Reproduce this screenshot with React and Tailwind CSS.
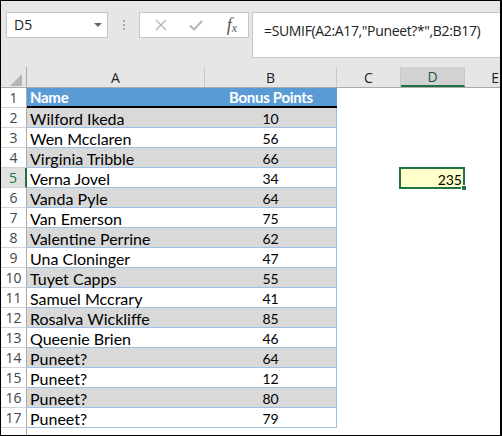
import React from 'react';

const rows = [
  ['Wilford Ikeda', 10],
  ['Wen Mcclaren', 56],
  ['Virginia Tribble', 66],
  ['Verna Jovel', 34],
  ['Vanda Pyle', 64],
  ['Van Emerson', 75],
  ['Valentine Perrine', 62],
  ['Una Cloninger', 47],
  ['Tuyet Capps', 55],
  ['Samuel Mccrary', 41],
  ['Rosalva Wickliffe', 85],
  ['Queenie Brien', 46],
  ['Puneet?', 64],
  ['Puneet?', 12],
  ['Puneet?', 80],
  ['Puneet?', 79],
];

const cellFont = { fontFamily: 'Lato, "Liberation Sans", sans-serif' };
const uiFont = { fontFamily: '"Open Sans", "Noto Sans", sans-serif' };

function RowHeader({ n, active, last }) {
  return (
    <div
      className={`w-[26px] shrink-0 h-full flex items-center justify-center border-b border-b-[#d4d4d4] text-[14px] ${
        active ? 'border-r-2 border-r-[#217346] bg-[#e1e1e1] text-[#217346]' : 'border-r border-r-[#ababab] text-[#444]'
      }`}
      style={uiFont}
    >
      {last ? '' : n}
    </div>
  );
}

function Toolbar() {
  return (
    <div className="h-[66px] shrink-0 flex items-start pl-[5px] pt-[11px]">
      <div className="w-[102px] h-[26px] bg-white border border-[#c6c6c6] flex items-center justify-between pl-[7px] pr-[5px]">
        <span className="text-[14px] text-[#222] leading-none" style={uiFont}>D5</span>
        <span className="w-0 h-0 border-l-[4px] border-r-[4px] border-t-[4px] border-l-transparent border-r-transparent border-t-[#666]" />
      </div>
      <div className="w-[31px] h-[26px] flex flex-col items-center justify-center gap-[2px]">
        <span className="w-[2px] h-[2px] bg-[#aaa]" />
        <span className="w-[2px] h-[2px] bg-[#aaa]" />
        <span className="w-[2px] h-[2px] bg-[#aaa]" />
      </div>
      <div className="w-[110px] h-[26px] bg-white border border-[#c6c6c6] flex items-center">
        <div className="w-[38px] flex justify-center pl-[4px]">
          <svg width="12" height="12" viewBox="0 0 12 12">
            <path d="M1 1 L11 11 M11 1 L1 11" stroke="#b5b5b5" strokeWidth="1.3" fill="none" />
          </svg>
        </div>
        <div className="w-[36px] flex justify-center">
          <svg width="14" height="11" viewBox="0 0 14 11">
            <path d="M1 5.5 L5 9.5 L13 1" stroke="#b5b5b5" strokeWidth="2" fill="none" />
          </svg>
        </div>
        <div className="flex-1 flex justify-center items-end text-[#555] italic pl-[2px]" style={{ fontFamily: '"Liberation Serif", serif' }}>
          <span className="text-[18px] leading-none">f</span>
          <span className="text-[12px] leading-none">x</span>
        </div>
      </div>
      <div className="ml-[3px] flex-1 h-[46px] bg-white border border-[#c6c6c6] border-r-0 pl-[11px] pt-[5px]">
        <span className="text-[14px] text-[#222] tracking-[-0.35px]" style={uiFont}>
          =SUMIF(A2:A17,"Puneet?*",B2:B17)
        </span>
      </div>
    </div>
  );
}

function ColumnHeaders() {
  const cols = [
    { l: 'A', w: 'w-[178px]' },
    { l: 'B', w: 'w-[132px]' },
    { l: 'C', w: 'w-[64px]' },
    { l: 'D', w: 'w-[64px]', active: true },
  ];
  return (
    <div className="h-[21px] shrink-0 flex border-b border-[#ababab]" style={uiFont}>
      <div className="w-[26px] shrink-0 border-r border-[#ababab] flex items-end justify-end pr-[4px] pb-[1px]">
        <svg width="12" height="12" viewBox="0 0 12 12">
          <path d="M12 0 L12 12 L0 12 Z" fill="#b4b4b4" />
        </svg>
      </div>
      {cols.map((c) => (
        <div
          key={c.l}
          className={`${c.w} shrink-0 border-r border-[#c8c8c8] flex items-center justify-center text-[14px] ${
            c.active ? 'bg-[#d2d2d2] border-b-2 border-b-[#217346] text-[#1d5a3a]' : 'text-[#222]'
          }`}
        >
          {c.l}
        </div>
      ))}
      <div className="flex-1 flex items-center justify-end pr-[1px] text-[14px] text-[#222]">E</div>
    </div>
  );
}

export default function App() {
  return (
    <div className="w-[502px] h-[436px] border border-black border-r-2 bg-[#e6e6e6] flex flex-col overflow-hidden">
      <Toolbar />
      <ColumnHeaders />
      <div className="flex flex-col bg-white">
        <div className="h-[20px] flex">
          <RowHeader n={1} />
          <div className="w-[310px] shrink-0 flex bg-[#5b9bd5] border-b-2 border-black text-white font-bold text-[15px] tracking-[-0.3px] pt-[1px]" style={cellFont}>
            <div className="w-[178px] pl-[3px] flex items-center">Name</div>
            <div className="w-[132px] flex items-center justify-center">Bonus Points</div>
          </div>
        </div>
        {rows.map(([name, pts], i) => {
          const n = i + 2;
          const shade = n % 2 === 0 ? 'bg-[#d9d9d9]' : 'bg-white';
          return (
            <div key={n} className="h-[20px] flex">
              <RowHeader n={n} active={n === 5} />
              <div
                className={`w-[310px] shrink-0 flex ${shade} border-b border-r border-[#9bc2e6] text-[16px] text-black pt-[2px]`}
                style={cellFont}
              >
                <div className="w-[178px] pl-[3px] flex items-center">{name}</div>
                <div className="flex-1 flex items-center justify-center text-[14px]">{pts}</div>
              </div>
              <div className="w-[63px] shrink-0" />
              {n === 5 && (
                <div className="relative w-[66px] h-[22px] -mt-[1px] -ml-[1px] shrink-0 bg-[#ffffcc] border-2 border-[#217346] flex items-center justify-end pr-[1px] pt-[2px] text-[14px]" style={cellFont}>
                  235
                  <span className="absolute -right-[4px] -bottom-[4px] w-[6px] h-[6px] bg-[#217346] border border-white" />
                </div>
              )}
            </div>
          );
        })}
        <div className="h-[10px] flex">
          <RowHeader n={18} last />
        </div>
      </div>
    </div>
  );
}
